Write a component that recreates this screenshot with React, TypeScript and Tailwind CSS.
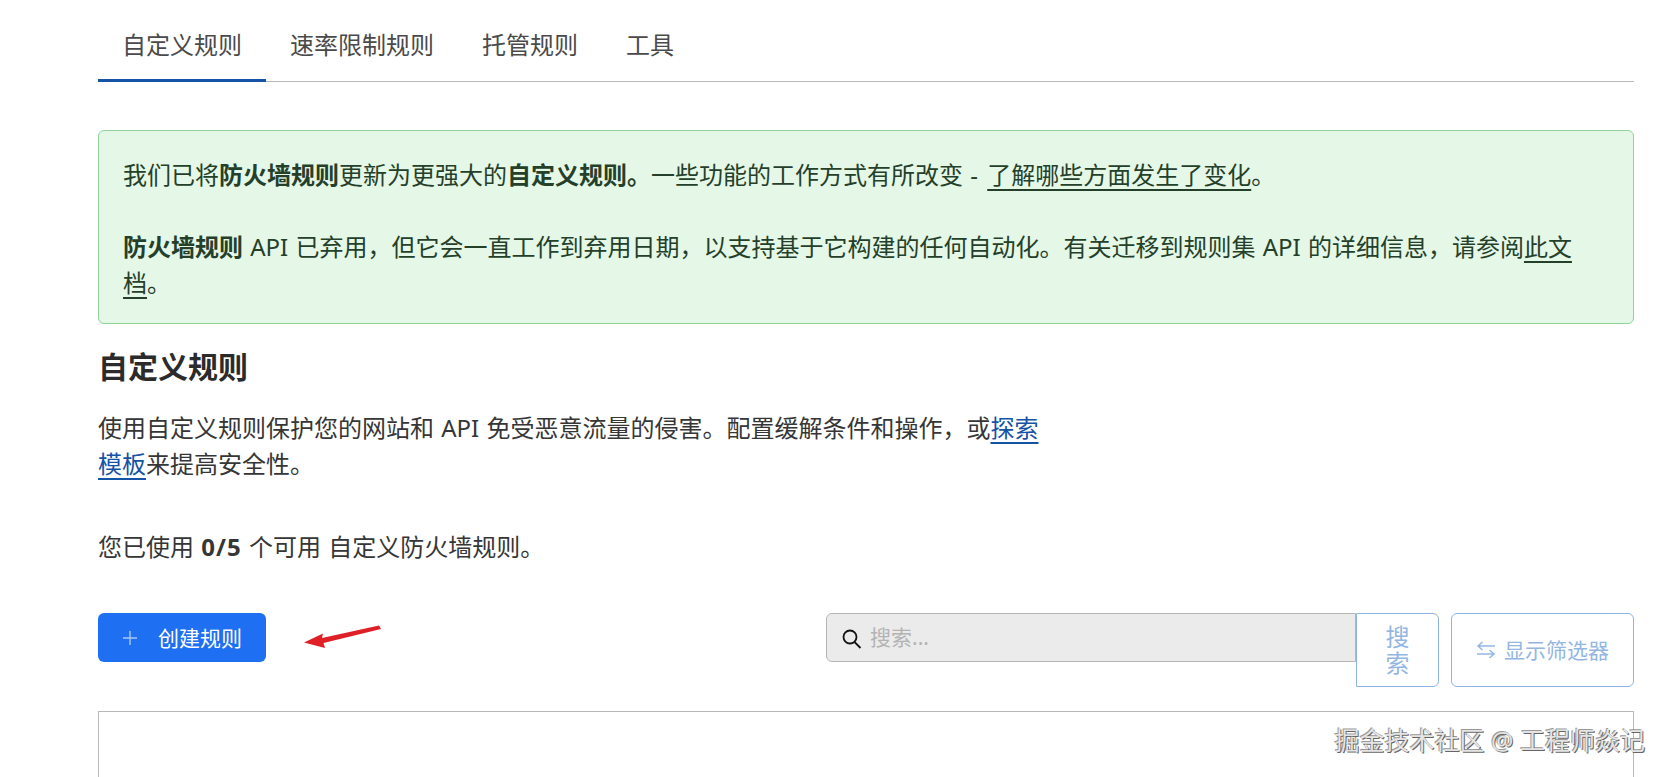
function Tab({ label, active }: { label: string; active?: boolean }) {
  return (
    <div className={active ? "px-6 h-[82px] pt-[27px] leading-9 border-b-[3px] border-[#1553a6] text-[#4a4a4a] -mb-px" : "px-6 h-[81px] pt-[27px] leading-9 text-[#4a4a4a]"}>
      {label}
    </div>
  );
}

export default function App() {
  return (
    <div className="relative h-[777px] w-full overflow-hidden bg-white text-2xl text-[#363636] [word-spacing:1px] [font-family:'Noto_Sans','Noto_Sans_CJK_SC',sans-serif]">
      <div className="pr-[33px] pl-[98px]">
        <div className="flex border-b border-[#b8b8b8] h-[82px]">
          <Tab label="自定义规则" active />
          <Tab label="速率限制规则" />
          <Tab label="托管规则" />
          <Tab label="工具" />
        </div>

        <div className="mt-12 h-[194px] rounded-md border border-[#8fd39a] bg-[#e5f7e7] px-6 py-[26px] leading-9 text-[#24402a]">
          <p>
            我们已将<b>防火墙规则</b>更新为更强大的<b>自定义规则。</b>一些功能的工作方式有所改变 - <a className="ml-[2px] underline decoration-2 underline-offset-[5px]">了解哪些方面发生了变化</a>。
          </p>
          <p className="mt-9">
            <b>防火墙规则</b> API 已弃用，但它会一直工作到弃用日期，以支持基于它构建的任何自动化。有关迁移到规则集 API 的详细信息，请参阅<a className="underline decoration-2 underline-offset-[5px]">此文档</a>。
          </p>
        </div>

        <h2 className="mt-[20px] text-[30px] leading-[45px] font-bold text-[#2b2b2b]">自定义规则</h2>
        <p className="mt-[21px] max-w-[960px] leading-9">
          使用自定义规则保护您的网站和 API 免受恶意流量的侵害。配置缓解条件和操作，或<a className="text-[#1553a6] underline decoration-2 underline-offset-[5px]">探索模板</a>来提高安全性。
        </p>
        <p className="mt-[47px] leading-9">
          您已使用 <b className="tracking-[1px]">0/5</b> 个可用 自定义防火墙规则。
        </p>

        <div className="mt-[48px] flex items-start">
          <button className="flex h-[49px] w-[168px] items-center justify-center gap-5 rounded-md bg-[#1f6ff2] text-[21px] text-white">
            <svg width="16" height="16" viewBox="0 0 16 16" fill="none" stroke="#a9c8fa" strokeWidth="1.4"><path d="M8 1v14M1 8h14" /></svg>
            创建规则
          </button>
          <div className="ml-auto flex h-[49px] w-[530px] items-center rounded-l-md border border-[#b5b5b5] bg-[#ebebeb] pl-[14px] text-[21px] text-[#b3b3b3]">
            <svg width="22" height="22" viewBox="0 0 22 22" fill="none" stroke="#111" strokeWidth="1.8" className="mr-[7px] mt-[3px] shrink-0"><circle cx="9" cy="9" r="6.5" /><path d="M13.5 14l6 6" /></svg>
            <span className="-mt-px">搜索...</span>
          </div>
          <button className="flex h-[74px] w-[83px] items-center justify-center rounded-r-md border border-[#8fb4e3] px-6 text-[#94b6e3] leading-[26px]">搜索</button>
          <button className="ml-3 flex h-[74px] w-[183px] items-center justify-center gap-2 rounded-md border border-[#8fb4e3] text-[21px] text-[#94b6e3]">
            <svg width="20" height="18" viewBox="0 0 20 18" fill="none" stroke="#94b6e3" strokeWidth="1.5"><path d="M19 5H2M6.5 1 2 5l4.5 4M1 13h17M13.5 9l4.5 4-4.5 4" /></svg>
            显示筛选器
          </button>
        </div>

        <div className="mt-6 h-[200px] border border-[#b8b8b8] border-b-0" />
      </div>

      <svg className="absolute left-[300px] top-[620px]" width="84" height="28" viewBox="0 0 84 28" fill="#df2027">
        <path d="M4 22.5 23 13.5 22 18 79 5.5 81 9 23.5 23 25 28z" />
      </svg>
      <div className="absolute right-[22px] top-[722px] text-[25px] leading-9 text-[#e4e4e4] [word-spacing:0] [text-shadow:1px_1px_0_#666,-1px_-1px_0_#999]">掘金技术社区 @ 工程师焱记</div>
    </div>
  );
}
